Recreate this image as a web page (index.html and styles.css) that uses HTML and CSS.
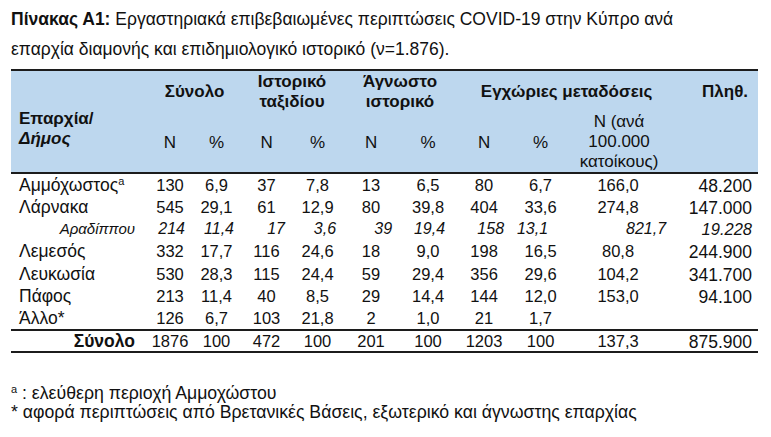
FILE: index.html
```html
<!DOCTYPE html>
<html lang="el">
<head>
<meta charset="utf-8">
<title>Πίνακας Α1</title>
<link rel="stylesheet" href="styles.css">
</head>
<body>
<div class="page">
  <p class="title"><b>Πίνακας Α1:</b> Εργαστηριακά επιβεβαιωμένες περιπτώσεις COVID-19 στην Κύπρο ανά<br>επαρχία διαμονής και επιδημιολογικό ιστορικό (ν=1.876).</p>
  <table class="data">
    <colgroup>
      <col class="c-label"><col class="c1"><col class="c2"><col class="c3"><col class="c4"><col class="c5"><col class="c6"><col class="c7"><col class="c8"><col class="c9"><col class="c10">
    </colgroup>
    <thead>
      <tr class="h1">
        <th rowspan="2" class="h-label">Επαρχία/<br><i>Δήμος</i></th>
        <th colspan="2">Σύνολο</th>
        <th colspan="2" class="two">Ιστορικό<br>ταξιδίου</th>
        <th colspan="2" class="two">Άγνωστο<br>ιστορικό</th>
        <th colspan="3" class="h-local">Εγχώριες μεταδόσεις</th>
        <th rowspan="2" class="h-pop">Πληθ.</th>
      </tr>
      <tr class="h2">
        <th>N</th><th>%</th>
        <th>N</th><th>%</th>
        <th>N</th><th>%</th>
        <th>N</th><th>%</th>
        <th class="h-rate">N (ανά<br>100.000<br>κατοίκους)</th>
      </tr>
    </thead>
    <tbody>
      <tr><td class="lbl">Αμμόχωστος<sup>a</sup></td><td>130</td><td>6,9</td><td>37</td><td>7,8</td><td>13</td><td>6,5</td><td>80</td><td>6,7</td><td>166,0</td><td class="pop">48.200</td></tr>
      <tr><td class="lbl">Λάρνακα</td><td>545</td><td>29,1</td><td>61</td><td>12,9</td><td>80</td><td>39,8</td><td>404</td><td>33,6</td><td>274,8</td><td class="pop">147.000</td></tr>
      <tr class="sub"><td class="lbl">Αραδίππου</td><td>214</td><td>11,4</td><td>17</td><td>3,6</td><td>39</td><td class="p12">19,4</td><td>158</td><td class="p22">13,1</td><td class="p0">821,7</td><td class="pop">19.228</td></tr>
      <tr><td class="lbl">Λεμεσός</td><td>332</td><td>17,7</td><td>116</td><td>24,6</td><td>18</td><td>9,0</td><td>198</td><td>16,5</td><td>80,8</td><td class="pop">244.900</td></tr>
      <tr><td class="lbl">Λευκωσία</td><td>530</td><td>28,3</td><td>115</td><td>24,4</td><td>59</td><td>29,4</td><td>356</td><td>29,6</td><td>104,2</td><td class="pop">341.700</td></tr>
      <tr><td class="lbl">Πάφος</td><td>213</td><td>11,4</td><td>40</td><td>8,5</td><td>29</td><td>14,4</td><td>144</td><td>12,0</td><td>153,0</td><td class="pop">94.100</td></tr>
      <tr><td class="lbl">Άλλο*</td><td>126</td><td>6,7</td><td>103</td><td>21,8</td><td>2</td><td>1,0</td><td>21</td><td>1,7</td><td></td><td class="pop"></td></tr>
    </tbody>
    <tfoot>
      <tr><td class="lbl total">Σύνολο</td><td>1876</td><td>100</td><td>472</td><td>100</td><td>201</td><td>100</td><td>1203</td><td>100</td><td>137,3</td><td class="pop">875.900</td></tr>
    </tfoot>
  </table>
  <div class="notes">
    <p><sup>a</sup> : ελεύθερη περιοχή Αμμοχώστου</p>
    <p>* αφορά περιπτώσεις από Βρετανικές Βάσεις, εξωτερικό και άγνωστης επαρχίας</p>
  </div>
</div>
</body>
</html>
```

FILE: styles.css
```css
html, body {
  margin: 0;
  padding: 0;
  background: #ffffff;
}

body {
  font-family: "Liberation Sans", Arial, sans-serif;
  color: #111111;
}

.page {
  padding: 4px 13px 0 11px;
}

.title {
  margin: 0;
  font-size: 17.5px;
  line-height: 30px;
  color: #111111;
}

.data {
  margin-top: 5px;
  width: 747px;
  border-collapse: collapse;
  table-layout: fixed;
  font-size: 16.5px;
}

.c-label { width: 137px; }
.c1 { width: 44px; }
.c2 { width: 49px; }
.c3 { width: 51px; }
.c4 { width: 51px; }
.c5 { width: 56px; }
.c6 { width: 58px; }
.c7 { width: 54px; }
.c8 { width: 59px; }
.c9 { width: 96px; }
.c10 { width: 92px; }

.data thead {
  background: #bdd7ee;
}

.data thead tr.h1 {
  border-top: 2px solid #1c1c1c;
}

.data thead tr.h2 {
  border-bottom: 2px solid #1c1c1c;
}

.data th {
  padding: 0;
  font-weight: bold;
  font-size: 17px;
  line-height: 20px;
  text-align: center;
  vertical-align: middle;
}

.h1 {
  height: 41px;
}

.h1 th {
  padding-top: 0;
}

.h1 th.two {
  padding-top: 1px;
}

.h2 {
  height: 60px;
}

.h2 th {
  font-weight: normal;
  padding-top: 2px;
}

.data th.h-label {
  text-align: left;
  vertical-align: top;
  padding: 38px 0 0 8px;
}

.data th.h-local {
  padding-left: 10px;
}

.data th.h-pop {
  vertical-align: top;
  text-align: right;
  padding: 11px 10px 0 0;
}

.data .h2 th.h-rate {
  line-height: 20px;
  padding: 0 0 0 2px;
  vertical-align: bottom;
}

.data tbody tr {
  height: 22.4px;
}

.data td {
  padding: 0;
  line-height: 18px;
  text-align: center;
  vertical-align: middle;
  white-space: nowrap;
}

.data td.lbl {
  text-align: left;
  padding-left: 8px;
  font-size: 17.5px;
}

.data td.lbl sup {
  font-size: 11px;
  line-height: 0;
  vertical-align: 6px;
}

.data td.pop {
  text-align: right;
  padding-right: 6px;
  padding-top: 2px;
  font-size: 17.5px;
}

.data tr.sub td {
  font-style: italic;
  font-size: 16px;
  text-align: right;
  padding-right: 7px;
}

.data tr.sub td.lbl {
  text-align: right;
  padding-right: 13px;
  padding-left: 0;
  font-size: 15px;
}

.data tr.sub td.p12 { padding-right: 12px; }
.data tr.sub td.p22 { padding-right: 22px; }
.data tr.sub td.p0 { padding-right: 0; }

.data tr.sub td.pop {
  font-size: 16.5px;
  padding-right: 6px;
  padding-top: 0;
}

.data tfoot tr {
  height: 22px;
  border-top: 2px solid #1c1c1c;
  border-bottom: 2px solid #1c1c1c;
}

.data td.total {
  font-weight: bold;
  text-align: right;
  padding-left: 0;
  padding-right: 13px;
  font-size: 17.5px;
}

.notes {
  margin-top: 31px;
  font-family: "Liberation Sans Narrow", "Arial Narrow", "Liberation Sans", sans-serif;
  font-stretch: condensed;
  font-size: 17.7px;
  line-height: 19px;
  color: #111111;
}

.notes p {
  margin: 0;
}

.notes sup {
  font-size: 11px;
  line-height: 0;
  vertical-align: 6px;
}
```
